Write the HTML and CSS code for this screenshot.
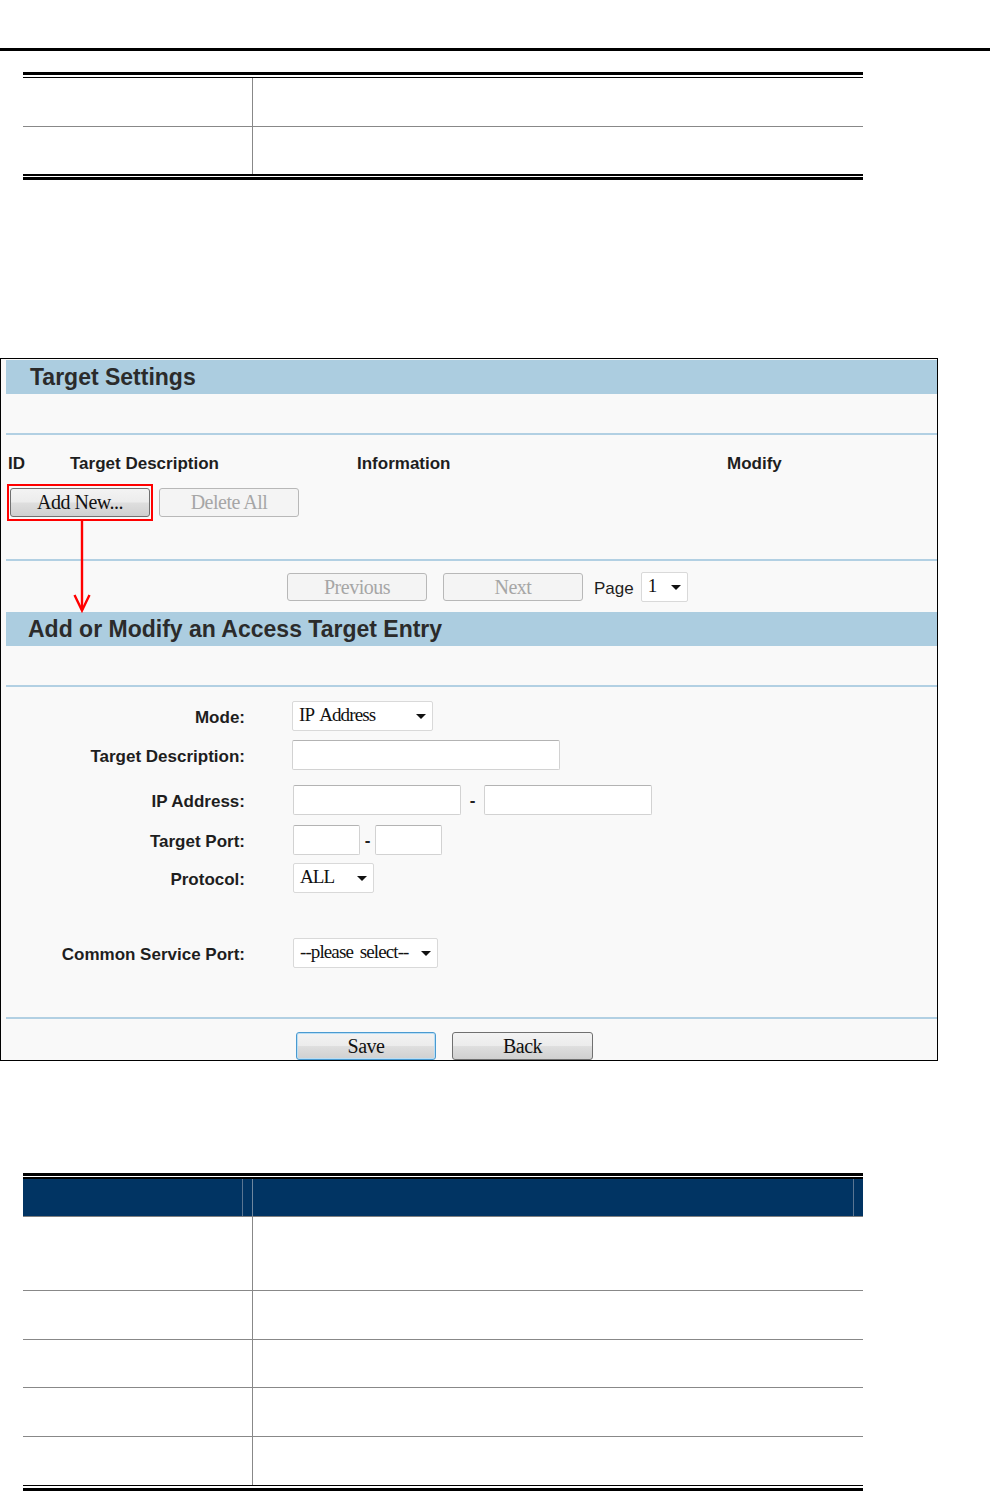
FILE: index.html
```html
<!DOCTYPE html>
<html>
<head>
<meta charset="utf-8">
<title>Target Settings</title>
<link rel="stylesheet" href="styles.css">
</head>
<body>
<div class="page">
  <div class="rule"></div>

  <div class="doc-table t1">
    <div class="dbl-top"></div>
    <div class="row h49"><div class="c1"></div><div class="c2"></div></div>
    <div class="row h47 nb"><div class="c1"></div><div class="c2"></div></div>
    <div class="dbl-bot"></div>
  </div>

  <div class="panel">
    <div class="bar">Target Settings</div>
    <div class="sep s39"></div>
    <div class="cols">
      <div>ID</div>
      <div>Target Description</div>
      <div>Information</div>
      <div>Modify</div>
    </div>
    <div class="actions">
      <div class="hl"><button class="btn">Add New...</button></div>
      <button class="btn dis del">Delete All</button>
    </div>
    <div class="sep s38"></div>
    <div class="pager">
      <button class="btn dis">Previous</button>
      <button class="btn dis nx">Next</button>
      <span class="pg">Page</span>
      <div class="sel w47"><span>1</span><i class="tri"></i></div>
    </div>
    <div class="bar bar2">Add or Modify an Access Target Entry</div>
    <div class="sep s39"></div>

    <div class="form">
      <div class="frow m14">
        <div class="lbl">Mode:</div>
        <div class="sel w141"><span>IP Address</span><i class="tri"></i></div>
      </div>
      <div class="frow m9">
        <div class="lbl">Target Description:</div>
        <div class="inp w268"></div>
      </div>
      <div class="frow m15">
        <div class="lbl">IP Address:</div>
        <div class="inp w168 n1"></div>
        <span class="dash d23">-</span>
        <div class="inp w168"></div>
      </div>
      <div class="frow m10">
        <div class="lbl">Target Port:</div>
        <div class="inp w67 n1"></div>
        <span class="dash d15">-</span>
        <div class="inp w67"></div>
      </div>
      <div class="frow m8">
        <div class="lbl">Protocol:</div>
        <div class="sel w81 n1"><span>ALL</span><i class="tri"></i></div>
      </div>
      <div class="frow m45">
        <div class="lbl">Common Service Port:</div>
        <div class="sel w145 n1"><span>--please select--</span><i class="tri"></i></div>
      </div>
    </div>

    <div class="sep s49"></div>
    <div class="foot">
      <button class="btn save">Save</button>
      <button class="btn back">Back</button>
    </div>

    <svg class="arrow" width="20" height="92" viewBox="0 0 20 92">
      <line x1="9" y1="0" x2="9" y2="89" stroke="#ff0000" stroke-width="2.4"/>
      <polyline points="1.5,74 9,89.5 16.5,74" fill="none" stroke="#ff0000" stroke-width="2.4"/>
    </svg>
  </div>

  <div class="doc-table t2">
    <div class="dbl-top2"></div>
    <div class="thead">
      <div class="th1"></div>
      <div class="thgap"></div>
      <div class="th2"></div>
      <div class="thgap"></div>
    </div>
    <div class="row h74"><div class="c1"></div><div class="c2"></div></div>
    <div class="row h49"><div class="c1"></div><div class="c2"></div></div>
    <div class="row h48"><div class="c1"></div><div class="c2"></div></div>
    <div class="row h49"><div class="c1"></div><div class="c2"></div></div>
    <div class="row h48 nb"><div class="c1"></div><div class="c2"></div></div>
    <div class="dbl-bot2"></div>
  </div>
</div>
</body>
</html>
```

FILE: styles.css
```css
* { box-sizing: border-box; }
html, body { margin: 0; padding: 0; background: #fff; }
body {
  font-family: "Liberation Sans", Arial, sans-serif;
  color: #222;
}
.page { width: 990px; height: 1491px; overflow: hidden; }

.rule { height: 3px; background: #000; margin-top: 48px; }

/* document tables */
.doc-table { margin-left: 23px; width: 840px; }
.t1 { margin-top: 21px; }
.dbl-top { height: 6px; border-top: 3px solid #000; border-bottom: 1px solid #000; }
.dbl-bot { height: 6px; border-top: 2px solid #000; border-bottom: 3px solid #000; }
.row { display: flex; border-bottom: 1px solid #888; }
.row.nb { border-bottom: 0; }
.c1 { width: 230px; border-right: 1px solid #888; }
.c2 { flex: 1; }
.h47 { height: 47px; }
.h48 { height: 48px; }
.h49 { height: 49px; }
.h74 { height: 74px; }

.t2 { margin-top: 112px; }
.dbl-top2 { height: 6px; border-top: 3px solid #000; border-bottom: 2px solid #000; }
.dbl-bot2 { height: 6px; border-top: 1px solid #000; border-bottom: 3px solid #000; }
.thead {
  display: flex;
  height: 38px;
  background: #013463;
  border-bottom: 1px solid #808080;
}
.th1 { width: 220px; border-right: 1px solid #5a7592; }
.thgap { width: 9px; }
.th2 { flex: 1; border-left: 1px solid #6f879f; border-right: 1px solid #5a7592; }

/* screenshot panel */
.panel {
  position: relative;
  margin-top: 178px;
  width: 938px;
  border: 1px solid #000;
  background: #f9f9f9;
  padding: 1px 0 0 5px;
}
.bar {
  height: 34px;
  line-height: 34px;
  background: #accde0;
  padding-left: 24px;
  font-size: 23px;
  font-weight: bold;
  color: #2b2b2b;
}
.bar2 { margin-top: 10px; padding-left: 22px; }
.sep { height: 2px; background: #b2d0e3; }
.s38 { margin-top: 38px; }
.s39 { margin-top: 39px; }
.s49 { margin-top: 49px; }

.cols {
  display: grid;
  grid-template-columns: 62px 287px 370px auto;
  padding-left: 2px;
  padding-top: 1px;
  margin-top: 18px;
  height: 20px;
  font-size: 17px;
  font-weight: bold;
  line-height: 20px;
  color: #1e1e1e;
}

.actions { display: flex; align-items: center; margin-top: 11px; padding-left: 1px; }
.hl { border: 2px solid #ff0000; padding: 2px 1px; }
.del { margin-left: 6px; }

.btn {
  display: block;
  width: 140px;
  height: 29px;
  padding: 0;
  font-family: "Liberation Serif", "Times New Roman", serif;
  font-size: 20px;
  letter-spacing: -0.5px;
  line-height: 27px;
  color: #111;
  border: 1px solid #707070;
  border-radius: 3px;
  background: linear-gradient(#f3f3f3 0%, #ececec 48%, #dedede 52%, #d0d0d0 100%);
}
.btn.dis {
  border-color: #b8b8b8;
  background: #f4f4f4;
  color: #a6a6a6;
}

.pager { display: flex; align-items: center; height: 30px; margin-top: 11px; padding-left: 281px; }
.pager .btn { height: 28px; }
.nx { margin-left: 16px; }
.pg { margin-left: 11px; margin-right: 7px; padding-top: 3px; font-size: 17px; color: #1e1e1e; }

.sel {
  display: flex;
  align-items: center;
  justify-content: space-between;
  height: 30px;
  background: #fff;
  border: 1px solid #d9d9d9;
  border-radius: 2px;
  padding: 0 6px 3px 6px;
  font-family: "Liberation Serif", "Times New Roman", serif;
  font-size: 19px;
  letter-spacing: -0.9px;
  word-spacing: 3px;
  color: #111;
}
.tri {
  width: 0; height: 0;
  border-left: 5px solid transparent;
  border-right: 5px solid transparent;
  border-top: 5px solid #111;
  margin-top: 3px;
}
.w47 { width: 47px; }
.w81 { width: 81px; }
.w141 { width: 141px; }
.w145 { width: 145px; }

.frow { display: flex; align-items: center; height: 30px; }
.m8 { margin-top: 8px; }
.m9 { margin-top: 9px; }
.m10 { margin-top: 10px; }
.m14 { margin-top: 14px; }
.m15 { margin-top: 15px; }
.m45 { margin-top: 45px; }
.lbl {
  width: 239px;
  margin-right: 47px;
  padding-top: 3px;
  text-align: right;
  font-size: 17px;
  font-weight: bold;
  color: #1e1e1e;
}
.n1 { margin-left: 1px; }
.inp {
  height: 30px;
  background: #fff;
  border: 1px solid #d2d2d2;
  border-top-color: #b3b3b3;
  border-radius: 2px;
}
.w67 { width: 67px; }
.w168 { width: 168px; }
.w268 { width: 268px; }
.dash { font-size: 17px; font-weight: bold; text-align: center; color: #222; padding-top: 2px; }
.d23 { width: 23px; }
.d15 { width: 15px; }

.foot { display: flex; margin-top: 13px; padding-left: 290px; }
.foot .btn { height: 28px; }
.save { border-color: #4a9ad0; box-shadow: inset 0 0 0 1px #b9def5; }
.back { margin-left: 16px; width: 141px; }

.arrow { position: absolute; left: 72px; top: 162px; }
```
